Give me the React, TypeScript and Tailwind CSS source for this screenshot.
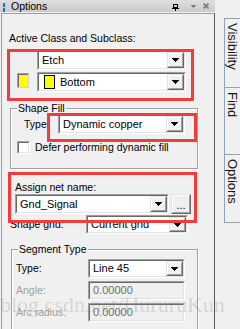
import React from "react";

const Arrow = () => (
  <svg width="7" height="4" viewBox="0 0 7 4" shapeRendering="crispEdges">
    <path d="M0 0h7v1h-1v1h-1v1h-1v1h-1v-1h-1v-1h-1v-1h-1z" fill="#000" />
  </svg>
);

const DropBtn = () => (
  <div className="w-[17px] h-full border border-[#e3e3e3] border-r-[#696969] border-b-[#696969] bg-[#f0f0f0]">
    <div className="w-full h-full border border-white border-r-[#a0a0a0] border-b-[#a0a0a0] flex items-center justify-center">
      <Arrow />
    </div>
  </div>
);

function Combo({
  className,
  children,
  disabled = false,
  button = true,
}: {
  className: string;
  children?: React.ReactNode;
  disabled?: boolean;
  button?: boolean;
}) {
  return (
    <div className={"border border-[#a0a0a0] border-r-white border-b-white " + className}>
      <div
        className={
          "h-full flex items-stretch border border-[#696969] border-r-[#e3e3e3] border-b-[#e3e3e3] " +
          (disabled ? "bg-[#f0f0f0]" : "bg-white")
        }
      >
        <div
          className={
            "flex-1 flex items-center pl-[3px] text-[11px] leading-[13px] overflow-hidden whitespace-nowrap " +
            (disabled ? "text-[#6d6d6d]" : "text-black")
          }
        >
          {children}
        </div>
        {button && <DropBtn />}
      </div>
    </div>
  );
}

function GroupBox({
  className,
  title,
  children,
}: {
  className: string;
  title: string;
  children?: React.ReactNode;
}) {
  return (
    <div
      className={
        "relative border border-[#a0a0a0] shadow-[inset_1px_1px_0_#ffffff,1px_1px_0_#ffffff] " + className
      }
    >
      <span className="absolute -top-[7px] left-[6px] px-[1px] bg-[#f0f0f0] leading-[13px] text-[10.5px] whitespace-nowrap">
        {title}
      </span>
      {children}
    </div>
  );
}

function Tab({ label, className }: { label: string; className: string }) {
  return (
    <div className={"border-l border-t border-[#8fa3bd] bg-[#f0f0f0] pt-[4px] " + className}>
      <span className="block [writing-mode:vertical-rl] text-[13px] leading-[15px] text-[#141414] whitespace-nowrap">
        {label}
      </span>
    </div>
  );
}

export default function App() {
  return (
    <div className="relative w-[240px] h-[329px] overflow-hidden bg-[#f0f0f0] flex font-['Liberation_Sans',Arial,sans-serif] text-black">
      {/* Left panel */}
      <div className="w-[215px] flex flex-col">
        {/* Title bar */}
        <div className="h-[16px] bg-gradient-to-b from-[#dedede] to-[#cbcbcb] flex items-start">
          <div className="ml-[3px] mt-[3px] w-[2px] flex flex-col gap-[1px]">
            <div className="h-[4px] bg-[#1f6fd8]" />
            <div className="h-[4px] bg-[#1f6fd8]" />
          </div>
          <span className="ml-[6px] text-[10.5px] leading-[12px]">Options</span>
          <div className="flex-1" />
          <svg className="mt-[4px]" width="7" height="7" viewBox="0 0 7 7" shapeRendering="crispEdges">
            <path d="M1.5 0.5h4v3h-4z" fill="none" stroke="#000" />
            <path d="M0 4.5h7" stroke="#000" />
            <path d="M3.5 4v3" stroke="#000" />
          </svg>
          <svg className="ml-[12px] mt-[5px]" width="5" height="3" viewBox="0 0 5 3" shapeRendering="crispEdges">
            <path d="M0 0h5v1h-1v1h-1v1h-1v-1h-1v-1h-1z" fill="#7c7c7c" />
          </svg>
          <svg className="ml-[7px] mt-[3px] mr-[6px]" width="6" height="6" viewBox="0 0 6 6">
            <path d="M0.5 0.5l5 5M5.5 0.5l-5 5" stroke="#7c7c7c" strokeWidth="1.6" />
          </svg>
        </div>

        {/* Content */}
        <div className="ml-[1px] mt-[1px] flex-1 flex flex-col border-l border-t border-r border-l-[#a0a0a0] border-t-[#a0a0a0] border-r-[#5a5a5a] text-[10.5px]">
          <div className="mt-[18px] ml-[7px] leading-[13px] whitespace-nowrap">Active Class and Subclass:</div>

          <div className="mt-[5px] ml-[35px]">
            <Combo className="w-[149px] h-[20px]">Etch</Combo>
          </div>

          <div className="mt-[2px] flex items-start">
            <div className="ml-[15px] mt-[1px] w-[12px] h-[15px] border border-[#a0a0a0] border-r-[#d0d0d0] border-b-[#d0d0d0]">
              <div className="w-full h-full border-t border-l border-[#696969] bg-[#ffff00]" />
            </div>
            <Combo className="ml-[8px] w-[149px] h-[20px]">
              <span className="ml-[2px] w-[11px] h-[14px] border border-black bg-[#ffff00] shrink-0" />
              <span className="ml-[5px]">Bottom</span>
            </Combo>
          </div>

          <GroupBox className="mt-[16px] ml-[8px] w-[188px] h-[61px]" title="Shape Fill">
            <div className="mt-[5px] flex items-center">
              <span className="ml-[13px] w-[34px] leading-[13px]">Type</span>
              <Combo className="w-[127px] h-[20px]">Dynamic copper</Combo>
            </div>
            <div className="mt-[7px] ml-[6px] flex items-center">
              <div className="w-[13px] h-[13px] border border-[#a0a0a0] border-r-white border-b-white">
                <div className="w-full h-full border border-[#696969] border-r-[#e3e3e3] border-b-[#e3e3e3] bg-white" />
              </div>
              <span className="ml-[5px] leading-[13px] whitespace-nowrap">Defer performing dynamic fill</span>
            </div>
          </GroupBox>

          <div className="mt-[12px] ml-[13px] leading-[13px]">Assign net name:</div>
          <div className="ml-[13px] flex items-start">
            <Combo className="w-[154px] h-[20px]">Gnd_Signal</Combo>
            <div className="ml-[2px] w-[20px] h-[20px] border border-[#e3e3e3] border-r-[#696969] border-b-[#696969] bg-[#f0f0f0]">
              <div className="w-full h-full border border-white border-r-[#a0a0a0] border-b-[#a0a0a0] flex items-end justify-center pb-[1px] text-[11px] leading-[11px]">
                ...
              </div>
            </div>
          </div>

          <div className="mt-[1px] flex items-center">
            <span className="ml-[8px] w-[76px] leading-[13px]">Shape grid:</span>
            <Combo className="w-[102px] h-[19px]">Current grid</Combo>
          </div>

          <GroupBox className="mt-[15px] ml-[9px] w-[187px] h-[100px]" title="Segment Type">
            <div className="mt-[9px] flex items-center">
              <span className="ml-[4px] w-[72px] leading-[13px]">Type:</span>
              <Combo className="w-[97px] h-[19px]">Line 45</Combo>
            </div>
            <div className="mt-[3px] flex items-center">
              <span className="ml-[4px] w-[72px] leading-[13px] text-[#a0a0a0]">Angle:</span>
              <Combo className="w-[97px] h-[19px]" disabled button={false}>
                0.00000
              </Combo>
            </div>
            <div className="mt-[3px] flex items-center">
              <span className="ml-[4px] w-[72px] leading-[13px] text-[#a0a0a0]">Arc radius:</span>
              <Combo className="w-[97px] h-[19px]" disabled button={false}>
                0.00000
              </Combo>
            </div>
          </GroupBox>
        </div>
      </div>

      {/* Right tab strip */}
      <div className="flex-1 flex flex-col pt-[18px] pl-[9px]">
        <Tab label="Visibility" className="h-[69px]" />
        <Tab label="Find" className="h-[67px]" />
        <Tab label="Options" className="h-[69px] border-b" />
      </div>

      {/* Annotation boxes */}
      <div className="pointer-events-none absolute left-[7px] top-[49px] w-[187px] h-[52px] border-[3px] border-[#f23b3b]" />
      <div className="pointer-events-none absolute left-[47px] top-[113px] w-[150px] h-[29px] border-[3px] border-[#f23b3b]" />
      <div className="pointer-events-none absolute left-[8px] top-[172px] w-[189px] h-[51px] border-[3px] border-[#f23b3b]" />

      {/* Watermark */}
      <div className="pointer-events-none absolute left-0 top-[294px] font-['Liberation_Serif',serif] text-[22px] leading-[22px] text-[#808080]/25 whitespace-nowrap">
        blog.csdn.net/HururuKun
      </div>
    </div>
  );
}
